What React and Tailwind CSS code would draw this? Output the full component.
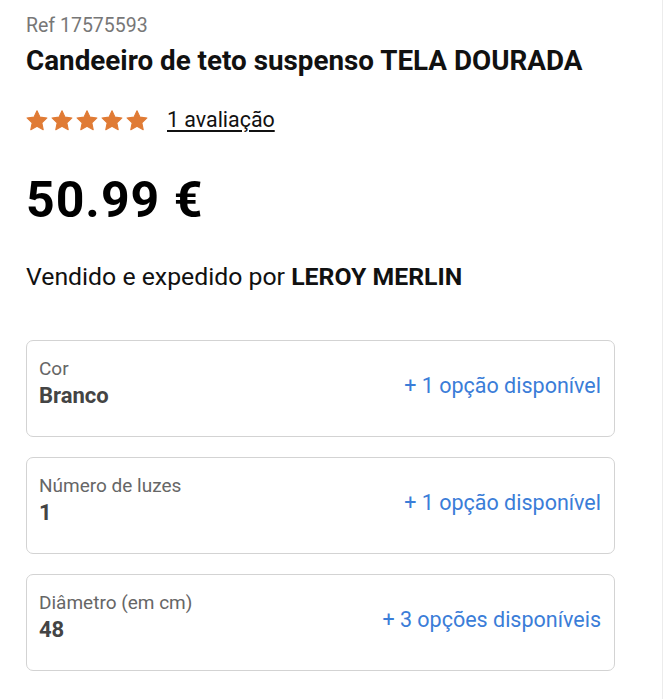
import React from "react";

const Star = () => (
  <svg width="22" height="21" viewBox="0 0 24 23" className="shrink-0">
    <path d="M12 0.8l3.3 7 7.6.9-5.6 5.3 1.5 7.6L12 17.8l-6.8 3.8 1.5-7.6L1.1 8.7l7.6-.9z" fill="#e07b35" stroke="#e07b35" strokeWidth="1.2" strokeLinejoin="round" />
  </svg>
);

const Card = ({ label, value, right }) => (
  <div className="flex h-[97px] items-start justify-between rounded-[7px] border border-[#d3d3d3] pl-[12px] pr-[13px] pt-[16px]">
    <div className="flex flex-col">
      <span className="text-[19px] leading-[24px] text-[#666]">{label}</span>
      <span className="text-[22px] font-bold leading-[30px] text-[#444]">{value}</span>
    </div>
    <span className="mt-[15px] text-[21.5px] leading-[28px] text-[#3b7dd8]">{right}</span>
  </div>
);

export default function App() {
  return (
    <div className="relative h-[699px] w-[665px] overflow-hidden bg-white" style={{ fontFamily: "Roboto, 'Noto Sans', sans-serif" }}>
      <div className="absolute right-[2px] top-0 h-full w-px bg-[#ececec]" />
      <div className="flex w-[615px] flex-col pl-[26px] pt-[13px]">
        <div className="text-[19.5px] leading-[26px] text-[#777]">Ref 17575593</div>
        <h1 className="mt-[6px] text-[27.8px] font-bold leading-[32px] text-[#111]">Candeeiro de teto suspenso TELA DOURADA</h1>
        <div className="mt-[30px] flex h-[26px] items-center">
          <div className="flex gap-[3px]">
            <Star /><Star /><Star /><Star /><Star />
          </div>
          <span className="ml-[19px] text-[21.4px] leading-[26px] text-[#111] underline underline-offset-[3px]">1 avaliação</span>
        </div>
        <div className="mt-[38px] text-[50px] font-bold leading-[58px] tracking-[1px] text-[#000]">50.99 €</div>
        <div className="mt-[33px] text-[24.8px] leading-[30px] text-[#111]">
          Vendido e expedido por <span className="font-bold">LEROY MERLIN</span>
        </div>
        <div className="mt-[48px] flex flex-col gap-[20px]">
          <Card label="Cor" value="Branco" right="+ 1 opção disponível" />
          <Card label="Número de luzes" value="1" right="+ 1 opção disponível" />
          <Card label="Diâmetro (em cm)" value="48" right="+ 3 opções disponíveis" />
        </div>
      </div>
    </div>
  );
}
